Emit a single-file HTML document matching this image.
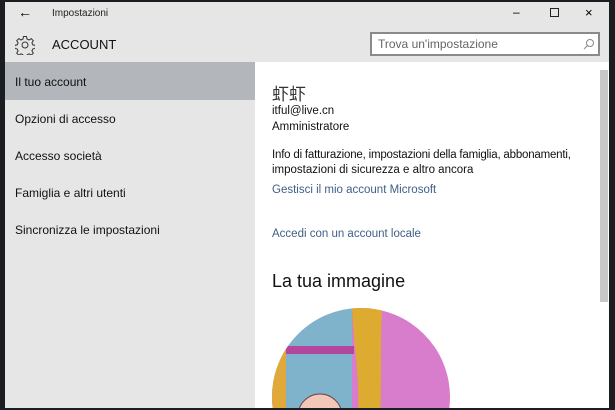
<!DOCTYPE html>
<html><head><meta charset="utf-8"><style>
*{margin:0;padding:0;box-sizing:border-box}
html,body{width:615px;height:410px;overflow:hidden}
body{background:#1c1d22;font-family:"Liberation Sans","Noto Sans CJK SC",sans-serif;position:relative}
.win{position:absolute;left:5px;top:2px;width:604px;height:406px;background:#e6e6e6;overflow:hidden}
.t{position:absolute;white-space:nowrap;color:#000}
.side{position:absolute;left:0;top:60px;width:250px;height:346px;background:#e6e6e6}
.sel{position:absolute;left:0;top:60px;width:250px;height:38px;background:#b3b6ba}
.content{position:absolute;left:250px;top:60px;width:354px;height:346px;background:#fff;overflow:hidden}
.nav{position:absolute;left:10px;font-size:12px;color:#111}
.c{position:absolute;left:17px;font-size:11.5px;color:#111;white-space:nowrap}
.link{color:#3f5f86}
</style></head><body>
<div class="win">
 <div class="t" style="left:13px;top:2px;font-size:14px">&#8592;</div>
 <div class="t" style="left:47px;top:6px;font-size:10px;color:#222">Impostazioni</div>
 <div class="t" style="left:508px;top:3px;font-size:12px">&#8211;</div>
 <div style="position:absolute;left:545px;top:6px;width:9px;height:9px;border:1px solid #222"></div>
 <div class="t" style="left:580px;top:3px;font-size:13px">&#215;</div>
 <svg style="position:absolute;left:10px;top:33px" width="20" height="20" viewBox="0 0 20 20"><g fill="none" stroke="#333" stroke-width="1"><circle cx="10" cy="10" r="3"/><path d="M8.5 1.5h3l.5 2.5 2 1 2.2-1.4 2.1 2.1-1.4 2.2 1 2 2.5.5v3l-2.5.5-1 2 1.4 2.2-2.1 2.1-2.2-1.4-2 1-.5 2.5h-3l-.5-2.5-2-1-2.2 1.4-2.1-2.1 1.4-2.2-1-2-2.5-.5v-3l2.5-.5 1-2-1.4-2.2 2.1-2.1 2.2 1.4 2-1z"/></g></svg>
 <div class="t" style="left:47px;top:35px;font-size:13px;color:#111">ACCOUNT</div>
 <div style="position:absolute;left:365px;top:30px;width:230px;height:24px;border:2px solid #8a8a8a;background:#fff"></div>
 <div class="t" style="left:373px;top:35px;font-size:12px;color:#666">Trova un'impostazione</div>
 <svg style="position:absolute;left:578px;top:36px" width="12" height="12" viewBox="0 0 12 12"><g fill="none" stroke="#888" stroke-width="1"><circle cx="7" cy="5" r="3.5"/><path d="M4.5 7.5 1 11"/></g></svg>
 <div class="side"></div>
 <div class="sel"></div>
 <div class="nav" style="top:73px">Il tuo account</div>
 <div class="nav" style="top:110px">Opzioni di accesso</div>
 <div class="nav" style="top:147px">Accesso società</div>
 <div class="nav" style="top:184px">Famiglia e altri utenti</div>
 <div class="nav" style="top:221px">Sincronizza le impostazioni</div>
 <div class="content">
  <div class="c" style="top:18px;font-size:17px;color:#333">虾虾</div>
  <div class="c" style="top:43px">itful@live.cn</div>
  <div class="c" style="top:59px">Amministratore</div>
  <div class="c" style="top:87px;letter-spacing:-0.2px">Info di fatturazione, impostazioni della famiglia, abbonamenti,</div>
  <div class="c" style="top:102px">impostazioni di sicurezza e altro ancora</div>
  <div class="c link" style="top:122px">Gestisci il mio account Microsoft</div>
  <div class="c link" style="top:166px">Accedi con un account locale</div>
  <div class="c" style="top:209px;font-size:18px;color:#111">La tua immagine</div>
  <div style="position:absolute;left:345px;top:8px;width:8px;height:232px;background:#c8c8c8"></div>
  <svg style="position:absolute;left:17px;top:246px" width="180" height="100" viewBox="0 0 180 100">
   <defs><clipPath id="cp"><circle cx="89" cy="89" r="89"/></clipPath></defs>
   <g clip-path="url(#cp)">
    <rect width="180" height="180" fill="#d77dcb"/>
    <rect x="0" y="0" width="80" height="120" fill="#7fb3cc"/>
    <rect x="0" y="38" width="82" height="8" fill="#b2479d"/>
    <rect x="0" y="0" width="14" height="120" fill="#e1a93a"/>
    <path d="M80 0h30c-2 40 0 70 -2 110h-22c2-40-4-70-6-110z" fill="#dcab2f"/>
    <circle cx="48" cy="108" r="22" fill="#f0c8b8" stroke="#6a4050"/>
   </g>
  </svg>
 </div>
</div>
</body></html>
